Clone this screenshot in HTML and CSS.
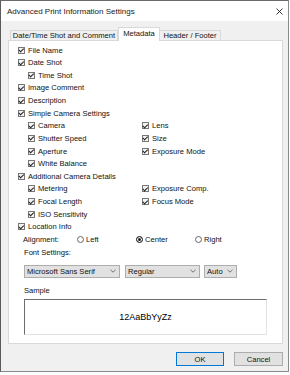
FILE: index.html
```html
<!DOCTYPE html>
<html lang="en">
<head>
  <meta charset="UTF-8">
  <title>Advanced Print Information Settings</title>
  <link rel="stylesheet" href="styles.css">
</head>
<body>
  <div class="window">
    <div class="titlebar">
      <span class="title">Advanced Print Information Settings</span>
      <svg class="close" width="7" height="7" viewBox="0 0 7 7"><path d="M0.5 0.5L6.5 6.5M6.5 0.5L0.5 6.5" stroke="#222" stroke-width="0.9"/></svg>
    </div>

    <div class="body">
      <div class="tabs">
        <div class="tab tab-date">Date/Time Shot and Comment</div>
        <div class="tab tab-meta active">Metadata</div>
        <div class="tab tab-head">Header / Footer</div>
      </div>

      <div class="panel">
        <div class="row"><span class="cb"></span>File Name</div>
        <div class="row"><span class="cb"></span>Date Shot</div>
        <div class="row sub"><span class="cb"></span>Time Shot</div>
        <div class="row"><span class="cb"></span>Image Comment</div>
        <div class="row"><span class="cb"></span>Description</div>
        <div class="row"><span class="cb"></span>Simple Camera Settings</div>
        <div class="grid">
          <div class="row"><span class="cb"></span>Camera</div>
          <div class="row"><span class="cb"></span>Lens</div>
          <div class="row"><span class="cb"></span>Shutter Speed</div>
          <div class="row"><span class="cb"></span>Size</div>
          <div class="row"><span class="cb"></span>Aperture</div>
          <div class="row"><span class="cb"></span>Exposure Mode</div>
          <div class="row"><span class="cb"></span>White Balance</div>
          <div class="row"></div>
        </div>
        <div class="row"><span class="cb"></span>Additional Camera Details</div>
        <div class="grid">
          <div class="row"><span class="cb"></span>Metering</div>
          <div class="row"><span class="cb"></span>Exposure Comp.</div>
          <div class="row"><span class="cb"></span>Focal Length</div>
          <div class="row"><span class="cb"></span>Focus Mode</div>
          <div class="row"><span class="cb"></span>ISO Sensitivity</div>
          <div class="row"></div>
        </div>
        <div class="row"><span class="cb"></span>Location Info</div>

        <div class="align-row">
          <span class="align-label">Alignment:</span>
          <span class="option"><span class="radio"></span>Left</span>
          <span class="option"><span class="radio on"></span>Center</span>
          <span class="option"><span class="radio"></span>Right</span>
        </div>

        <div class="label">Font Settings:</div>
        <div class="selects">
          <div class="select sel-font">Microsoft Sans Serif<svg width="6" height="4" viewBox="0 0 6 4"><path d="M0.5 0.8L3 3.2L5.5 0.8" fill="none" stroke="#555" stroke-width="0.8"/></svg></div>
          <div class="select sel-style">Regular<svg width="6" height="4" viewBox="0 0 6 4"><path d="M0.5 0.8L3 3.2L5.5 0.8" fill="none" stroke="#555" stroke-width="0.8"/></svg></div>
          <div class="select sel-size">Auto<svg width="6" height="4" viewBox="0 0 6 4"><path d="M0.5 0.8L3 3.2L5.5 0.8" fill="none" stroke="#555" stroke-width="0.8"/></svg></div>
        </div>

        <div class="label sample-label">Sample</div>
        <div class="sample">12AaBbYyZz</div>
      </div>

      <div class="buttons">
        <button class="btn default">OK</button>
        <button class="btn cancel">Cancel</button>
      </div>
    </div>
  </div>
</body>
</html>
```

FILE: styles.css
```css
body { margin: 0; background: #fff; font-family: "Liberation Sans", Arial, sans-serif; font-size: 7.6px; color: #111; }
.window { width: 287px; height: 370px; border: 1px solid #8a8a8a; border-left-color: #5a5a5a; border-top-color: #6a6a6a; background: #f0f0f0; }
.titlebar { height: 20px; background: #fff; display: flex; align-items: center; justify-content: space-between; padding: 0 5px 0 6px; }
.title { font-size: 8px; color: #1a1a1a; }
.close { margin-top: 1px; }

.body { padding: 6px 5px 0 7px; }
.tabs { display: flex; align-items: flex-end; height: 13px; padding-left: 2px; position: relative; z-index: 1; }
.tab { box-sizing: border-box; height: 10px; border: 1px solid #d9d9d9; border-bottom: none; background: #f0f0f0; display: flex; align-items: center; justify-content: center; white-space: nowrap; }
.tab-date { width: 108px; }
.tab-meta { width: 42px; }
.tab-head { width: 61px; border-left: none; }
.tab.active { height: 14px; margin-bottom: -1px; background: #fff; padding-bottom: 2px; }

.panel { box-sizing: border-box; height: 304px; border: 1px solid #d9d9d9; background: #fff; padding: 2.7px 0 0 9px; }
.row { display: flex; align-items: center; gap: 3px; height: 12.64px; white-space: nowrap; }
.sub { padding-left: 10px; }
.grid { display: grid; grid-template-columns: 114px auto; padding-left: 10px; }
.cb { box-sizing: border-box; width: 7px; height: 7px; border: 1px solid #777; background: #f4f4f4; position: relative; flex: none; }
.cb::after { content: ''; position: absolute; left: 1.4px; top: -0.4px; width: 1.6px; height: 3.6px; border: solid #222; border-width: 0 1.2px 1.2px 0; transform: rotate(45deg); }

.align-row { display: flex; align-items: center; height: 12.64px; padding-left: 5px; }
.align-label { width: 54px; }
.option { width: 59px; display: flex; align-items: center; gap: 2px; }
.radio { box-sizing: border-box; width: 7px; height: 7px; border-radius: 50%; border: 1px solid #666; background: #fff; }
.radio.on { border-color: #333; background: #222; box-shadow: inset 0 0 0 1px #fff; }

.label { height: 12.64px; display: flex; align-items: center; padding-left: 6px; }
.selects { display: flex; margin-top: 6.5px; padding-left: 6px; height: 13px; }
.select { box-sizing: border-box; height: 13px; border: 1px solid #adadad; background: #e1e1e1; display: flex; align-items: center; justify-content: space-between; padding: 0 3px 0 2px; white-space: nowrap; }
.sel-font { width: 96px; }
.sel-style { width: 75px; margin-left: 5px; }
.sel-size { width: 33px; margin-left: 4px; }

.sample-label { margin-top: 6px; }
.sample { box-sizing: border-box; margin: 3px 0 0 6px; width: 243px; height: 36px; background: #fff; border: 1px solid #e3e3e3; border-top-color: #6d6d6d; border-left-color: #6d6d6d; display: flex; align-items: center; justify-content: center; font-size: 9px; color: #000; }

.buttons { display: flex; justify-content: flex-end; gap: 10px; margin-top: 8px; }
.btn { box-sizing: border-box; width: 48px; height: 14px; padding: 0; border: 1px solid #adadad; background: #e1e1e1; font-family: inherit; font-size: 7.6px; color: #111; }
.btn.default { border-color: #0078d7; }
.btn.cancel { width: 49px; }
```
